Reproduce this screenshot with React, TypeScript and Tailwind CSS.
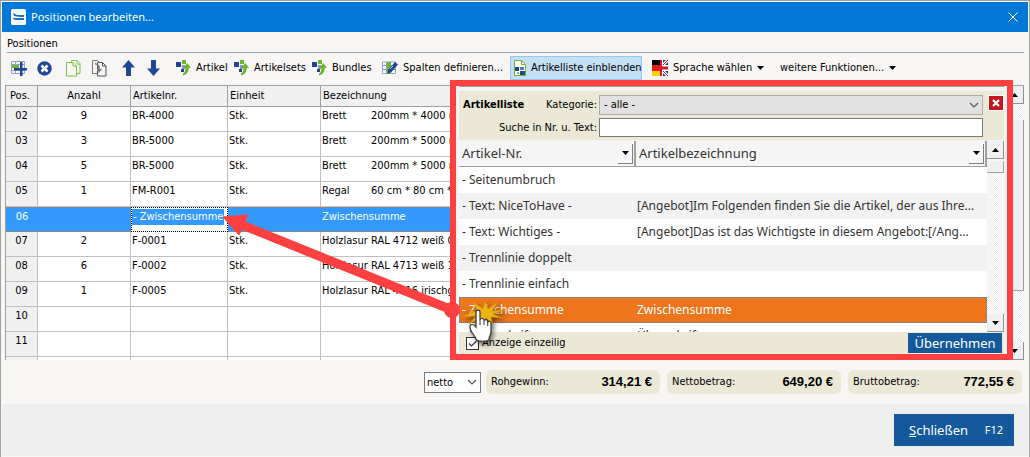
import type { ReactNode } from "react";

type Position = {
  pos: string;
  amount?: string;
  number?: string;
  unit?: string;
  kind?: string;
  detail?: string;
};

const POSITIONS: Position[] = [
  { pos: "02", amount: "9", number: "BR-4000", unit: "Stk.", kind: "Brett", detail: "200mm * 4000 mm" },
  { pos: "03", amount: "3", number: "BR-5000", unit: "Stk.", kind: "Brett", detail: "200mm * 5000 mm" },
  { pos: "04", amount: "5", number: "BR-5000", unit: "Stk.", kind: "Brett", detail: "200mm * 5000 mm" },
  { pos: "05", amount: "1", number: "FM-R001", unit: "Stk.", kind: "Regal", detail: "60 cm * 80 cm * 30 cm" },
  { pos: "06", number: "- Zwischensumme", kind: "Zwischensumme" },
  { pos: "07", amount: "2", number: "F-0001", unit: "Stk.", kind: "Holzlasur", detail: "RAL 4712 weiß 0,5 l" },
  { pos: "08", amount: "6", number: "F-0002", unit: "Stk.", kind: "Holzlasur", detail: "RAL 4713 weiß 1,0 l" },
  { pos: "09", amount: "1", number: "F-0005", unit: "Stk.", kind: "Holzlasur", detail: "RAL 4716 irischgrün" },
  { pos: "10" },
  { pos: "11" },
  { pos: "" },
];

const ARTICLES = [
  { number: "- Seitenumbruch", name: "" },
  { number: "- Text: NiceToHave -", name: "[Angebot]Im Folgenden finden Sie die Artikel, der aus Ihre..." },
  { number: "- Text: Wichtiges -", name: "[Angebot]Das ist das Wichtigste in diesem Angebot:[/Ang..." },
  { number: "- Trennlinie doppelt", name: "" },
  { number: "- Trennlinie einfach", name: "" },
  { number: "- Zwischensumme", name: "Zwischensumme" },
  { number: "- Überschrift", name: "Überschrift" },
];

const TOTALS = [
  { label: "Rohgewinn:", value: "314,21 €" },
  { label: "Nettobetrag:", value: "649,20 €" },
  { label: "Bruttobetrag:", value: "772,55 €" },
];

function Triangle({ up = false }: { up?: boolean }) {
  return (
    <svg width="7" height="4" viewBox="0 0 7 4" className="shrink-0">
      <path d={up ? "M0 4h7L3.5 0z" : "M0 0h7L3.5 4z"} fill="#000" />
    </svg>
  );
}

function Chevron() {
  return (
    <svg
      width="10"
      height="6"
      viewBox="0 0 10 6"
      className="pointer-events-none absolute top-1/2 right-1 -translate-y-1/2"
    >
      <path d="M1 1l4 4 4-4" fill="none" stroke="#555" strokeWidth="1.2" />
    </svg>
  );
}

function ArticleIcon() {
  return (
    <svg width="15" height="16" viewBox="0 0 15 16" className="shrink-0">
      <path d="M0 2h5v5H0z" fill="#1f4696" />
      <path d="M6 0h4v4H6z" fill="#6fb52c" />
      <path d="M6 5h3v4H6z" fill="#8496bd" />
      <path d="M5 9h3v3H5z" fill="#1f4696" />
      <path d="M11.200 3l3.800 5h-2.300c0 4-1.700 6.500-5.700 7.500v-2c1.800-1 2.500-2.500 2.500-5.500H7.500z" fill="#6fb52c" />
    </svg>
  );
}

function AddRowIcon() {
  return (
    <svg width="17" height="16" viewBox="0 0 17 16" className="shrink-0">
      <path d="M.5 1.500h13v12H.5zM.5 4.500h13M.5 10.500h13M4.500 1.500v12M9.500 1.500v12" fill="none" stroke="#8da3cc" />
      <path d="M1 5h7v3H1z" fill="#6fb52c" />
      <path d="M9 2h2.500v6H16v2.500h-4.500V16H9v-5.500H3V8h6z" fill="#1f4696" />
    </svg>
  );
}

function DeleteIcon() {
  return (
    <svg width="15" height="15" viewBox="0 0 15 15" className="shrink-0">
      <circle cx="7.500" cy="7.500" r="7.200" fill="#1f4696" />
      <path d="M4.500 4.500l6 6M10.500 4.500l-6 6" stroke="#fff" strokeWidth="2.600" />
    </svg>
  );
}

function CopyIcon() {
  return (
    <svg width="15" height="17" viewBox="0 0 15 17" className="shrink-0" fill="#f7f6f5" stroke="#7fc241">
      <path d="M5.500 2V.5h5.500l3 3v10h-3" />
      <path d="M11 .5v3.500h3" />
      <path d="M.5 2.500h6.500l3.500 3.500v10H.5z" />
      <path d="M7 2.500V6h3.500" />
    </svg>
  );
}

function PasteIcon() {
  return (
    <svg width="15" height="17" viewBox="0 0 15 17" className="shrink-0">
      <path d="M5 13.500H.5V.5h5l2 2" fill="#f7f6f5" stroke="#777" />
      <path d="M5.500 2.500h5l3.500 3.500v10H5.500z" fill="#f7f6f5" stroke="#555" />
      <path d="M10.500 2.500V6H14" fill="none" stroke="#555" />
      <path d="M3 3c4 1 5 3 5 6h2l-3.500 4.500V11H5V9h1.500C6.500 6.500 5 4.500 3 4.500z" fill="#777" />
    </svg>
  );
}

function MoveIcon({ down = false }: { down?: boolean }) {
  return (
    <svg width="13" height="16" viewBox="0 0 13 16" className="shrink-0">
      <path
        d={down ? "M4 0h5v8.500h4L6.500 16 0 8.500h4z" : "M4 16h5V7.500h4L6.500 0 0 7.500h4z"}
        fill="#1f4696"
      />
    </svg>
  );
}

function ColumnsIcon() {
  return (
    <svg width="16" height="14" viewBox="0 0 16 14" className="shrink-0">
      <path d="M.5 1h13v11.500H.5zM.5 4.500h13M.5 8.500h13M4.500 1v11.500" fill="#fff" stroke="#8da3cc" />
      <path d="M5 1h4v12H5z" fill="#6fb52c" />
      <path d="M13 1l3 2.500-7 8-3.500 1.500.5-4z" fill="#1f4696" />
      <path d="M8 8l3-3" stroke="#b9c6e0" />
    </svg>
  );
}

function ListIcon() {
  return (
    <svg width="12" height="16" viewBox="0 0 12 16" className="shrink-0">
      <path d="M.5.5h7l4 4v11H.5z" fill="#fff" stroke="#6fb52c" />
      <path d="M7.500.5v4h4" fill="none" stroke="#6fb52c" />
      <path d="M1 7h4v4H1zM6 11h5v4H6z" fill="#1f4696" />
      <path d="M6 7h4v3H6z" fill="#5878b5" />
      <path d="M3 12h2v2H3z" fill="#8da3cc" />
    </svg>
  );
}

function FlagIcon() {
  return (
    <svg width="16" height="16" viewBox="0 0 16 16" className="shrink-0">
      <path d="M8 0h8v16H8z" fill="#213a86" />
      <path d="M10 6l6-6M10 10l6 6" stroke="#fff" strokeWidth="3" />
      <path d="M11 5l5-5M11 11l5 5" stroke="#d8182c" />
      <path d="M8 5h8v6H8zM8 0h3v16H8z" fill="#fff" />
      <path d="M8 6.500h8v3H8zM8 0h2v16H8z" fill="#d8182c" />
      <path d="M0 0h8v6H0z" fill="#000" />
      <path d="M0 5h8v6H0z" fill="#e01b22" />
      <path d="M0 11h8v5H0z" fill="#ffcf00" />
    </svg>
  );
}

function ClickCursor() {
  return (
    <svg
      width="48"
      height="56"
      viewBox="0 0 48 56"
      className="pointer-events-none absolute bottom-0.5 left-1 drop-shadow-[2px_3px_2px_rgba(0,0,0,0.5)]"
    >
      <path
        d="M20 18 12 5l11 8 2-9 3 9 10-7-6 9 13-1-12 4 10 4-12-1 2 8-7-7-4 8-2-8-11 6 7-8-14 1 11-5-10-5z"
        fill="#eeb211"
        stroke="#c98d00"
        strokeWidth=".6"
      />
      <path
        d="M16 16c0-2.500 4-2.500 4 0v8c0-2 4-2 4 0v1c0-2 3.700-1.600 3.700.3v1c.4-1.700 3.300-1.300 3.300.7v9c0 3-2 4-2 7 0 3-12 3-13 0-1-4-6-7-6-12 0-3 3-3.600 6 0z"
        fill="#fff"
        stroke="#333"
        strokeWidth="1.200"
      />
      <path d="M20 24v5M24 25v4M27.700 26v4" stroke="#333" />
    </svg>
  );
}

function ScrollButton({ up = false, label }: { up?: boolean; label: string }) {
  return (
    <button
      type="button"
      aria-label={label}
      className="flex h-[18px] w-full shrink-0 items-center justify-center border-r border-b border-[#909090] bg-[#f0f0f0]"
    >
      <Triangle up={up} />
    </button>
  );
}

function ToolButton({ className, children }: { className: string; children: ReactNode }) {
  return (
    <button type="button" className={`flex h-6 shrink-0 items-center gap-[5px] whitespace-nowrap ${className}`}>
      {children}
    </button>
  );
}

function Toolbar() {
  return (
    <div className="flex h-8 items-center pr-2 pb-0.5 pl-[9px]">
      <ToolButton className="w-[26px]">
        <AddRowIcon />
      </ToolButton>
      <ToolButton className="w-[29px]">
        <DeleteIcon />
      </ToolButton>
      <ToolButton className="w-[26px]">
        <CopyIcon />
      </ToolButton>
      <ToolButton className="w-[30px]">
        <PasteIcon />
      </ToolButton>
      <ToolButton className="w-[25px]">
        <MoveIcon />
      </ToolButton>
      <ToolButton className="w-[29px]">
        <MoveIcon down />
      </ToolButton>
      <ToolButton className="w-[58px]">
        <ArticleIcon />
        Artikel
      </ToolButton>
      <ToolButton className="w-[78px]">
        <ArticleIcon />
        Artikelsets
      </ToolButton>
      <ToolButton className="w-[70px]">
        <ArticleIcon />
        Bundles
      </ToolButton>
      <ToolButton className="w-[128px]">
        <ColumnsIcon />
        Spalten definieren...
      </ToolButton>
      <ToolButton className="w-[132px] border border-[#90c8f6] bg-[#c5dff5] pl-[3px]">
        <ListIcon />
        Artikelliste einblenden
      </ToolButton>
      <ToolButton className="ml-2.5 w-[128px]">
        <FlagIcon />
        Sprache wählen
        <Triangle />
      </ToolButton>
      <ToolButton className="w-[120px]">
        weitere Funktionen...
        <Triangle />
      </ToolButton>
    </div>
  );
}

function PositionRow({ row }: { row: Position }) {
  const active = row.pos === "06";
  const cell = active
    ? "border-y border-dotted border-[#c87838] bg-[#3399ff] text-white"
    : "border-r border-b border-[#c0c0c0] bg-white";

  return (
    <tr className="h-[25px] align-top leading-[18px]">
      <td className={`text-center ${active ? cell : "border-r border-b border-[#c0c0c0] bg-[#f0f0f0]"}`}>{row.pos}</td>
      <td className={`text-center ${cell}`}>{row.amount}</td>
      <td className={active ? "border border-dotted border-black bg-white" : `pl-px ${cell}`}>
        {active ? (
          <span className="inline-block bg-[#3399ff] px-px leading-4 text-white">{row.number}</span>
        ) : (
          row.number
        )}
      </td>
      <td className={`pl-px ${cell}`}>{row.unit}</td>
      <td className={`pl-px ${cell}`}>
        <span className="inline-block w-[49px]">{row.kind}</span>
        {row.detail}
      </td>
    </tr>
  );
}

function PositionTable() {
  return (
    <div className="min-w-0 flex-1 overflow-hidden border-t border-l border-[#a0a0a0]">
      <table className="w-full table-fixed border-separate border-spacing-0 whitespace-nowrap">
        <colgroup>
          <col className="w-8" />
          <col className="w-[93px]" />
          <col className="w-[97px]" />
          <col className="w-[93px]" />
          <col />
        </colgroup>
        <thead>
          <tr className="h-[19px] bg-[#f0f0f0] text-left leading-5 *:border-b *:border-[#a0a0a0] *:font-normal">
            <th className="border-r pl-1">Pos.</th>
            <th className="border-r text-center">Anzahl</th>
            <th className="border-r pl-0.5">Artikelnr.</th>
            <th className="border-r pl-0.5">Einheit</th>
            <th className="pl-0.5">Bezeichnung</th>
          </tr>
        </thead>
        <tbody>
          {POSITIONS.map((row) => (
            <PositionRow key={row.pos} row={row} />
          ))}
        </tbody>
      </table>
    </div>
  );
}

function ArticleHeader({ label }: { label: string }) {
  return (
    <th className="border-r-2 border-b border-[#a0a0a0] bg-[#f5f5f5] pr-px pl-[3px] text-[13px] font-normal">
      <div className="flex h-[25px] items-center justify-between">
        {label}
        <button
          type="button"
          aria-label={`${label} filtern`}
          className="flex h-5 w-[15px] items-center justify-center border-r border-b border-[#808080] bg-[#f7f7f7]"
        >
          <Triangle />
        </button>
      </div>
    </th>
  );
}

function ArticlePanel() {
  return (
    <section className="absolute -top-[5px] right-[11px] left-[445px] flex h-[280px] flex-col border-6 border-[#ff4040] bg-[#f4f4f4] px-[3px]">
      <div className="h-[5px] border-t border-[#a0a0a0]" />
      <div className="flex h-[49px] items-start bg-[#ebe8d6] pt-1">
        <div className="grid flex-1 grid-cols-[140px_1fr] gap-y-[3px]">
          <div className="flex items-center justify-between pr-0.5 pl-1">
            <h2 className="font-bold">Artikelliste</h2>
            <label htmlFor="category">Kategorie:</label>
          </div>
          <div className="relative">
            <select
              id="category"
              className="block h-5 w-full appearance-none rounded-none border border-[#adadad] bg-[#e1e1e1] px-1"
            >
              <option>- alle -</option>
            </select>
            <Chevron />
          </div>
          <label htmlFor="search" className="self-center pr-0.5 text-right">
            Suche in Nr. u. Text:
          </label>
          <input id="search" type="text" className="h-[19px] w-full border border-[#7a7a7a] bg-white px-1" />
        </div>
        <button
          type="button"
          aria-label="Artikelliste ausblenden"
          className="ml-[5px] flex size-4 items-center justify-center border border-white bg-[#c4161c]"
        >
          <svg width="8" height="8" viewBox="0 0 8 8">
            <path d="M1 1l6 6M7 1L1 7" stroke="#fff" strokeWidth="2.200" />
          </svg>
        </button>
      </div>

      <div className="flex min-h-0 flex-1 pt-px">
        <div className="min-w-0 flex-1 overflow-hidden bg-white">
          <table className="w-full table-fixed border-separate border-spacing-0 text-left font-['Noto_Sans','Open_Sans',sans-serif] text-xs text-[#333]">
            <colgroup>
              <col className="w-[177px]" />
              <col />
            </colgroup>
            <thead>
              <tr>
                <ArticleHeader label="Artikel-Nr." />
                <ArticleHeader label="Artikelbezeichnung" />
              </tr>
            </thead>
            <tbody>
              {ARTICLES.map((article, index) => {
                const selected = article.number === "- Zwischensumme";
                return (
                  <tr
                    key={article.number}
                    className={`h-[26px] leading-6 ${
                      selected
                        ? "bg-[#ed751c] text-white *:border-y *:border-dotted *:border-[#3090e0]"
                        : index % 2
                          ? "bg-[#f2f2f2]"
                          : "bg-white"
                    }`}
                  >
                    <td className={`truncate ${selected ? "border-l pl-0.5" : "pl-[3px]"}`}>{article.number}</td>
                    <td className={`truncate pl-px ${selected ? "border-r" : ""}`}>{article.name}</td>
                  </tr>
                );
              })}
            </tbody>
          </table>
        </div>
        <div className="flex w-[17px] flex-col bg-[repeating-conic-gradient(#fff_0_25%,#ececec_0_50%)] bg-size-[2px_2px]">
          <ScrollButton up label="Artikel nach oben" />
          <div className="mt-0.5 h-3 border-r border-b border-[#a0a0a0] bg-[#f0f0f0]" />
          <div className="flex-1" />
          <ScrollButton label="Artikel nach unten" />
        </div>
      </div>

      <div className="flex h-[22px] shrink-0 items-center justify-between bg-[#ebe8d6] pr-0.5 pl-[7px]">
        <label className="flex items-center gap-[3px]">
          <span className="relative flex">
            <input
              type="checkbox"
              defaultChecked
              className="peer size-[13px] appearance-none border border-[#333] bg-white"
            />
            <svg
              width="13"
              height="13"
              viewBox="0 0 13 13"
              className="pointer-events-none absolute inset-0 hidden peer-checked:block"
            >
              <path d="M3 6.500l2.500 2.500L10.500 4" fill="none" stroke="#333" strokeWidth="1.200" />
            </svg>
          </span>
          Anzeige einzeilig
        </label>
        <button
          type="button"
          className="h-5 w-[94px] bg-[#14599b] font-['Noto_Sans','Open_Sans',sans-serif] text-[13px] leading-5 text-white"
        >
          Übernehmen
        </button>
      </div>
      <ClickCursor />
    </section>
  );
}

function PointerArrow() {
  return (
    <svg
      width="245"
      height="115"
      viewBox="0 0 245 115"
      className="pointer-events-none absolute top-[124px] left-[214px]"
    >
      <path d="M22 15.500L233 101" stroke="#ff4040" strokeWidth="9" />
      <path d="M4 8L29 6 20 26z" fill="#ff4040" stroke="#ff4040" strokeLinejoin="round" />
      <circle cx="233" cy="101" r="8" fill="#ff4040" />
    </svg>
  );
}

function TotalsBar() {
  return (
    <div className="flex h-11 items-start justify-end gap-[7px] pt-[10px] pr-1.5">
      <div className="relative -mr-0.5 w-[57px] pt-0.5">
        <select
          aria-label="Preisart"
          className="block h-[21px] w-full appearance-none rounded-none border border-[#7a7a7a] bg-white px-0.5"
        >
          <option>netto</option>
          <option>brutto</option>
        </select>
        <Chevron />
      </div>
      {TOTALS.map((total) => (
        <div
          key={total.label}
          className="flex h-6 w-[174px] items-center justify-between rounded-md bg-[#ebe8d6] pr-2 pl-[5px]"
        >
          <span>{total.label}</span>
          <span className="font-['Liberation_Sans',Arial,sans-serif] text-[13px] font-bold">{total.value}</span>
        </div>
      ))}
    </div>
  );
}

export default function App() {
  return (
    <main className="border border-[#a0a0a0] bg-[#f7f6f5] p-px font-['DejaVu_Sans_Condensed','Noto_Sans',sans-serif] text-[11px] leading-4 text-black">
      <header className="flex h-[30px] items-center bg-[#0078d7] pr-2.5 pl-[9px] text-white">
        <svg width="15" height="16" viewBox="0 0 15 16">
          <rect width="15" height="16" rx="1.500" fill="#f4f6f8" />
          <path d="M2 4l4 2h7v2H9L3 7zM2 9h11v2H5L2 10z" fill="#1f6fb8" />
        </svg>
        <h1 className="ml-[5px] flex-1 font-['Noto_Sans','Open_Sans',sans-serif]">Positionen bearbeiten...</h1>
        <button type="button" aria-label="Fenster schließen">
          <svg width="10" height="10" viewBox="0 0 10 10">
            <path d="M.5.5l9 9M9.500.5l-9 9" stroke="#fff" />
          </svg>
        </button>
      </header>

      <div className="mr-1 ml-[5px] h-[21px] border-b border-[#a0a0a0] pt-1">Positionen</div>
      <Toolbar />

      <div className="relative mr-1 ml-[3px] flex h-[275px]">
        <PositionTable />
        <div className="flex w-[18px] flex-col border-t border-[#a0a0a0] bg-[repeating-conic-gradient(#fff_0_25%,#ececec_0_50%)] bg-size-[2px_2px]">
          <ScrollButton up label="Positionen nach oben" />
          <div className="mt-4 h-[171px] border-r border-b border-[#a0a0a0] bg-[#f0f0f0]" />
          <div className="flex-1" />
          <ScrollButton label="Positionen nach unten" />
        </div>
        <ArticlePanel />
        <PointerArrow />
      </div>

      <TotalsBar />

      <footer className="flex h-[52px] items-start justify-end bg-[#eee] pt-2.5 pr-3.5">
        <button
          type="button"
          className="flex h-8 w-[120px] items-center justify-between bg-[#14599b] pr-[11px] pl-[15px] font-['Noto_Sans','Open_Sans',sans-serif] text-[13px] text-white"
        >
          <span>
            <span className="underline">S</span>chließen
          </span>
          <span className="text-[11px]">F12</span>
        </button>
      </footer>
    </main>
  );
}
